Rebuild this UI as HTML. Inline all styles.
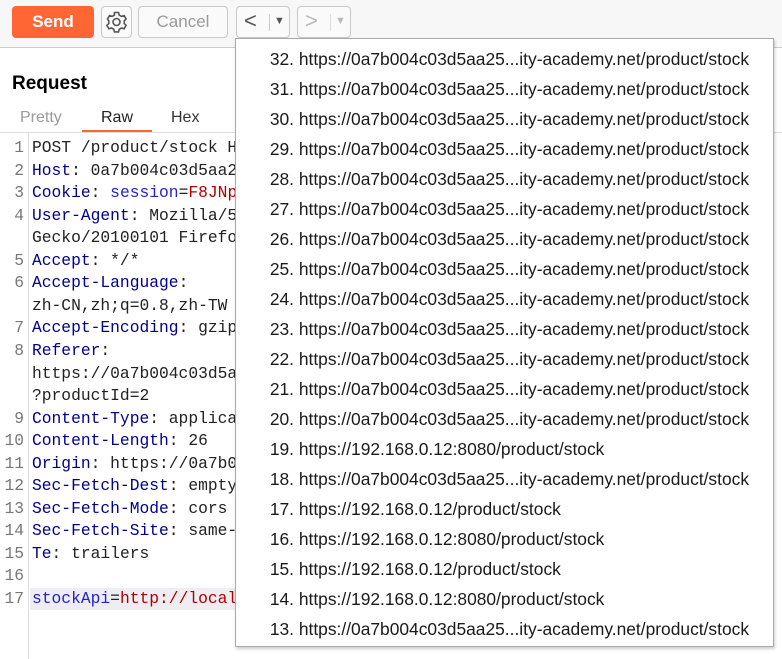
<!DOCTYPE html>
<html><head><meta charset="utf-8"><style>
*{margin:0;padding:0;box-sizing:border-box}
body{width:782px;height:659px;background:#fff;position:relative;overflow:hidden;font-family:"Liberation Sans","Noto Sans CJK SC",sans-serif}
.top{position:absolute;left:0;top:0;width:782px;height:48px;background:#f7f7f7;border-bottom:1px solid #ccc}
.btn{position:absolute;top:6px;height:32px;border:1px solid #c8c8c8;border-radius:4px;background:#fafafa}
.send{left:12px;width:82px;background:#ff6633;border-color:#ff6633;color:#fff;font-weight:bold;font-size:17px;text-align:center;line-height:30px}
.cancel{left:138px;width:90px;color:#999;font-size:17px;text-align:center;line-height:30px}
.req{position:absolute;left:12px;top:73px;font-weight:bold;font-size:19px;color:#000}
.tab{position:absolute;top:108px;font-size:16px}
.code{position:absolute;left:0;top:137px;font-family:"Liberation Mono",monospace;font-size:16.3px;line-height:22.55px;white-space:pre;color:#222}
.ln{position:absolute;left:0;width:24px;text-align:right;color:#777}
.tx{position:absolute;left:32px}
.k{color:#00008b}.b{color:#2424c8}.r{color:#b00000}
.dd{position:absolute;left:235px;top:38px;width:539px;height:609px;background:#fff;border:1px solid #aaa;box-shadow:1px 2px 3px rgba(0,0,0,.2);overflow:hidden}
.it{position:absolute;left:0;width:535px;font-size:17.4px;color:#1a1a1a;white-space:nowrap;height:30px;line-height:30px}
.it b{font-weight:normal;display:inline-block;width:58px;text-align:right}
</style></head><body>
<div class="top">
<div class="btn send">Send</div>
<div class="btn" style="left:101px;width:31px;">
<svg width="29" height="30" viewBox="0 0 29 30"><g fill="none" stroke="#555" stroke-width="1.6"><circle cx="14.5" cy="15" r="3.5"/><path d="M12.5 5.5h4l.7 2.6 2.3 1.3 2.6-.8 2 3.4-1.9 1.9v2.6l1.9 1.9-2 3.4-2.6-.8-2.3 1.3-.7 2.6h-4l-.7-2.6-2.3-1.3-2.6.8-2-3.4 1.9-1.9v-2.6L5.5 12l2-3.4 2.6.8 2.3-1.3z"/></g></svg></div>
<div class="btn cancel">Cancel</div>
<div class="btn" style="left:236px;width:54px;color:#555;font-size:22px;line-height:28px;padding-left:7px">&lt;<span style="position:absolute;left:32px;top:7px;height:17px;border-left:1px solid #ccc"></span><span style="position:absolute;left:37px;top:0;font-size:11px">▼</span></div>
<div class="btn" style="left:297px;width:54px;color:#bbb;font-size:22px;line-height:28px;padding-left:7px">&gt;<span style="position:absolute;left:32px;top:7px;height:17px;border-left:1px solid #ddd"></span><span style="position:absolute;left:37px;top:0;font-size:11px">▼</span></div>
</div>
<div class="req">Request</div>
<div class="tab" style="left:20px;top:109px;color:#999">Pretty</div>
<div class="tab" style="left:101px;top:109px;color:#222">Raw</div>
<div style="position:absolute;left:82px;top:130px;width:70px;height:2px;background:#ff6633"></div>
<div class="tab" style="left:171px;top:109px;color:#333">Hex</div>
<div style="position:absolute;left:0;top:132px;width:782px;border-top:1px solid #ddd"></div>
<div style="position:absolute;left:28px;top:133px;height:526px;border-left:1px solid #ddd"></div>
<div style="position:absolute;left:30px;top:588px;width:210px;height:22px;background:#eeeef2"></div>
<div class="code">
<div class="ln" style="top:0">1</div><div class="tx" style="top:0">POST /product/stock HTTP/2</div>
<div class="ln" style="top:22.55px">2</div><div class="tx" style="top:22.55px"><span class="k">Host</span>: 0a7b004c03d5aa25</div>
<div class="ln" style="top:45.1px">3</div><div class="tx" style="top:45.1px"><span class="k">Cookie</span>: <span class="b">session</span>=<span class="r">F8JNp</span></div>
<div class="ln" style="top:67.65px">4</div><div class="tx" style="top:67.65px"><span class="k">User-Agent</span>: Mozilla/5.0</div>
<div class="tx" style="top:90.2px">Gecko/20100101 Firefox</div>
<div class="ln" style="top:112.75px">5</div><div class="tx" style="top:112.75px"><span class="k">Accept</span>: */*</div>
<div class="ln" style="top:135.3px">6</div><div class="tx" style="top:135.3px"><span class="k">Accept-Language</span>:</div>
<div class="tx" style="top:157.85px">zh-CN,zh;q=0.8,zh-TW</div>
<div class="ln" style="top:180.4px">7</div><div class="tx" style="top:180.4px"><span class="k">Accept-Encoding</span>: gzip</div>
<div class="ln" style="top:202.95px">8</div><div class="tx" style="top:202.95px"><span class="k">Referer</span>:</div>
<div class="tx" style="top:225.5px">https://0a7b004c03d5aa</div>
<div class="tx" style="top:248.05px">?productId=2</div>
<div class="ln" style="top:270.6px">9</div><div class="tx" style="top:270.6px"><span class="k">Content-Type</span>: application</div>
<div class="ln" style="top:293.15px">10</div><div class="tx" style="top:293.15px"><span class="k">Content-Length</span>: 26</div>
<div class="ln" style="top:315.7px">11</div><div class="tx" style="top:315.7px"><span class="k">Origin</span>: https://0a7b0</div>
<div class="ln" style="top:338.25px">12</div><div class="tx" style="top:338.25px"><span class="k">Sec-Fetch-Dest</span>: empty</div>
<div class="ln" style="top:360.8px">13</div><div class="tx" style="top:360.8px"><span class="k">Sec-Fetch-Mode</span>: cors</div>
<div class="ln" style="top:383.35px">14</div><div class="tx" style="top:383.35px"><span class="k">Sec-Fetch-Site</span>: same-</div>
<div class="ln" style="top:405.9px">15</div><div class="tx" style="top:405.9px"><span class="k">Te</span>: trailers</div>
<div class="ln" style="top:428.45px">16</div>
<div class="ln" style="top:451px">17</div><div class="tx" style="top:451px"><span class="b">stockApi</span>=<span class="r">http://localhost</span></div>
</div>
<div class="dd">
<div class="it" style="top:5px"><b>32.</b> https://0a7b004c03d5aa25...ity-academy.net/product/stock</div>
<div class="it" style="top:35px"><b>31.</b> https://0a7b004c03d5aa25...ity-academy.net/product/stock</div>
<div class="it" style="top:65px"><b>30.</b> https://0a7b004c03d5aa25...ity-academy.net/product/stock</div>
<div class="it" style="top:95px"><b>29.</b> https://0a7b004c03d5aa25...ity-academy.net/product/stock</div>
<div class="it" style="top:125px"><b>28.</b> https://0a7b004c03d5aa25...ity-academy.net/product/stock</div>
<div class="it" style="top:155px"><b>27.</b> https://0a7b004c03d5aa25...ity-academy.net/product/stock</div>
<div class="it" style="top:185px"><b>26.</b> https://0a7b004c03d5aa25...ity-academy.net/product/stock</div>
<div class="it" style="top:215px"><b>25.</b> https://0a7b004c03d5aa25...ity-academy.net/product/stock</div>
<div class="it" style="top:245px"><b>24.</b> https://0a7b004c03d5aa25...ity-academy.net/product/stock</div>
<div class="it" style="top:275px"><b>23.</b> https://0a7b004c03d5aa25...ity-academy.net/product/stock</div>
<div class="it" style="top:305px"><b>22.</b> https://0a7b004c03d5aa25...ity-academy.net/product/stock</div>
<div class="it" style="top:335px"><b>21.</b> https://0a7b004c03d5aa25...ity-academy.net/product/stock</div>
<div class="it" style="top:365px"><b>20.</b> https://0a7b004c03d5aa25...ity-academy.net/product/stock</div>
<div class="it" style="top:395px"><b>19.</b> https://192.168.0.12:8080/product/stock</div>
<div class="it" style="top:425px"><b>18.</b> https://0a7b004c03d5aa25...ity-academy.net/product/stock</div>
<div class="it" style="top:455px"><b>17.</b> https://192.168.0.12/product/stock</div>
<div class="it" style="top:485px"><b>16.</b> https://192.168.0.12:8080/product/stock</div>
<div class="it" style="top:515px"><b>15.</b> https://192.168.0.12/product/stock</div>
<div class="it" style="top:545px"><b>14.</b> https://192.168.0.12:8080/product/stock</div>
<div class="it" style="top:575px"><b>13.</b> https://0a7b004c03d5aa25...ity-academy.net/product/stock</div>
</div>
</body></html>
